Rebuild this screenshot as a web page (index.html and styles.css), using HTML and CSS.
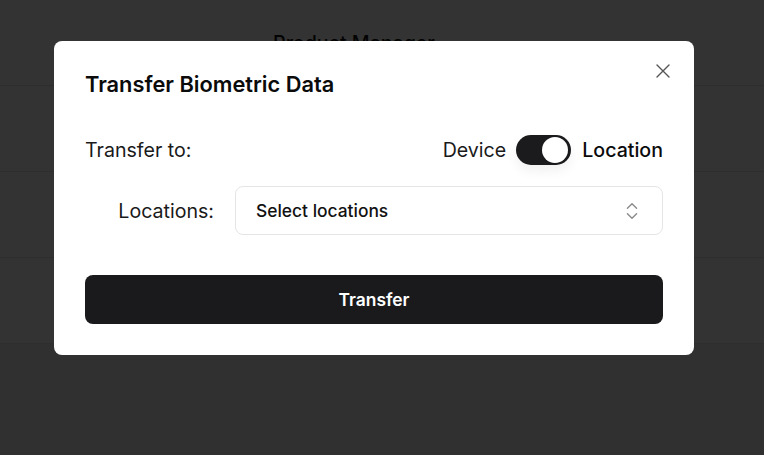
FILE: index.html
```html
<!DOCTYPE html>
<html lang="en">
<head>
<meta charset="utf-8">
<title>Transfer Biometric Data</title>
<link rel="stylesheet" href="styles.css">
</head>
<body>
<div class="page">
  <div class="table">
    <div class="row head">
      <div class="cell"></div>
      <div class="cell center">Product Manager</div>
      <div class="cell"></div>
    </div>
    <div class="row"><div class="cell"></div><div class="cell"></div><div class="cell"></div></div>
    <div class="row"><div class="cell"></div><div class="cell"></div><div class="cell"></div></div>
    <div class="row"><div class="cell"></div><div class="cell"></div><div class="cell"></div></div>
  </div>
</div>
<div class="overlay"></div>
<div class="modal" role="dialog">
  <h2 class="title">Transfer Biometric Data</h2>
  <button class="close" aria-label="Close">
    <svg width="14" height="14" viewBox="0 0 14 14"><path d="M1 1L13 13M13 1L1 13" stroke="#555" stroke-width="1.4" stroke-linecap="round"/></svg>
  </button>
  <div class="form-row">
    <span class="label">Transfer to:</span>
    <div class="switch-group">
      <span class="opt">Device</span>
      <span class="switch"><span class="knob"></span></span>
      <span class="opt active">Location</span>
    </div>
  </div>
  <div class="form-row second">
    <span class="label right">Locations:</span>
    <div class="select">
      <span>Select locations</span>
      <svg width="22" height="22" viewBox="0 0 24 24" fill="none" stroke="#8a8a8a" stroke-width="1.5" stroke-linecap="round" stroke-linejoin="round"><path d="m7 15 5 5 5-5"/><path d="m7 9 5-5 5 5"/></svg>
    </div>
  </div>
  <button class="primary">Transfer</button>
</div>
</body>
</html>
```
FILE: styles.css
```css
* { box-sizing: border-box; }
html, body { margin: 0; padding: 0; }
body {
  width: 764px;
  height: 455px;
  overflow: hidden;
  font-family: Inter, "Noto Sans", sans-serif;
  background: #f0f0f0;
  position: relative;
}
.page { background: #f0f0f0; height: 455px; }
.table { background: #fff; }
.row {
  display: grid;
  grid-template-columns: 220px 268px 1fr;
  height: 86px;
  border-bottom: 1px solid #e6e6e6;
}
.cell {
  display: flex;
  align-items: center;
  justify-content: center;
  font-size: 19.6px;
  font-weight: 500;
  color: #111;
}
.overlay {
  position: absolute;
  inset: 0;
  background: rgba(0, 0, 0, 0.8);
}
.modal {
  position: absolute;
  left: 54px;
  top: 41px;
  width: 640px;
  height: 314px;
  background: #fff;
  border-radius: 8px;
  padding: 28px 31px 31px;
  display: flex;
  flex-direction: column;
}
.title {
  margin: 0;
  font-size: 21.8px;
  line-height: 30px;
  font-weight: 600;
  color: #0b0b0c;
}
.close {
  position: absolute;
  top: 23px;
  right: 24px;
  width: 14px;
  height: 14px;
  padding: 0;
  border: 0;
  background: none;
  display: flex;
}
.form-row {
  display: flex;
  align-items: center;
  justify-content: space-between;
  height: 30px;
  margin-top: 36px;
}
.form-row.second {
  height: 49px;
  margin-top: 21px;
  justify-content: flex-start;
  gap: 21px;
}
.label {
  font-size: 19.6px;
  color: #1a1a1a;
}
.label.right {
  width: 129px;
  text-align: right;
}
.switch-group {
  display: flex;
  align-items: center;
  gap: 10px;
}
.opt {
  font-size: 19.6px;
  color: #1a1a1a;
}
.opt.active { font-weight: 500; color: #0b0b0c; margin-left: 1px; }
.switch {
  width: 55px;
  height: 30px;
  border-radius: 15px;
  background: #1b1b1d;
  position: relative;
  box-shadow: 0 6px 12px rgba(0,0,0,0.06);
}
.knob {
  position: absolute;
  right: 3px;
  top: 2px;
  width: 26px;
  height: 26px;
  border-radius: 50%;
  background: #fff;
  box-shadow: 0 1px 2px rgba(0,0,0,0.15);
}
.select {
  flex: 1;
  height: 49px;
  border: 1px solid #e5e5e5;
  border-radius: 8px;
  display: flex;
  align-items: center;
  justify-content: space-between;
  padding: 0 19px 0 20px;
  font-size: 17.4px;
  font-weight: 500;
  color: #111;
}
.primary {
  margin-top: 40px;
  height: 50px;
  border: 0;
  border-radius: 8px;
  background: #1a1a1c;
  color: #fff;
  font-family: inherit;
  font-size: 17.4px;
  font-weight: 600;
}
```
